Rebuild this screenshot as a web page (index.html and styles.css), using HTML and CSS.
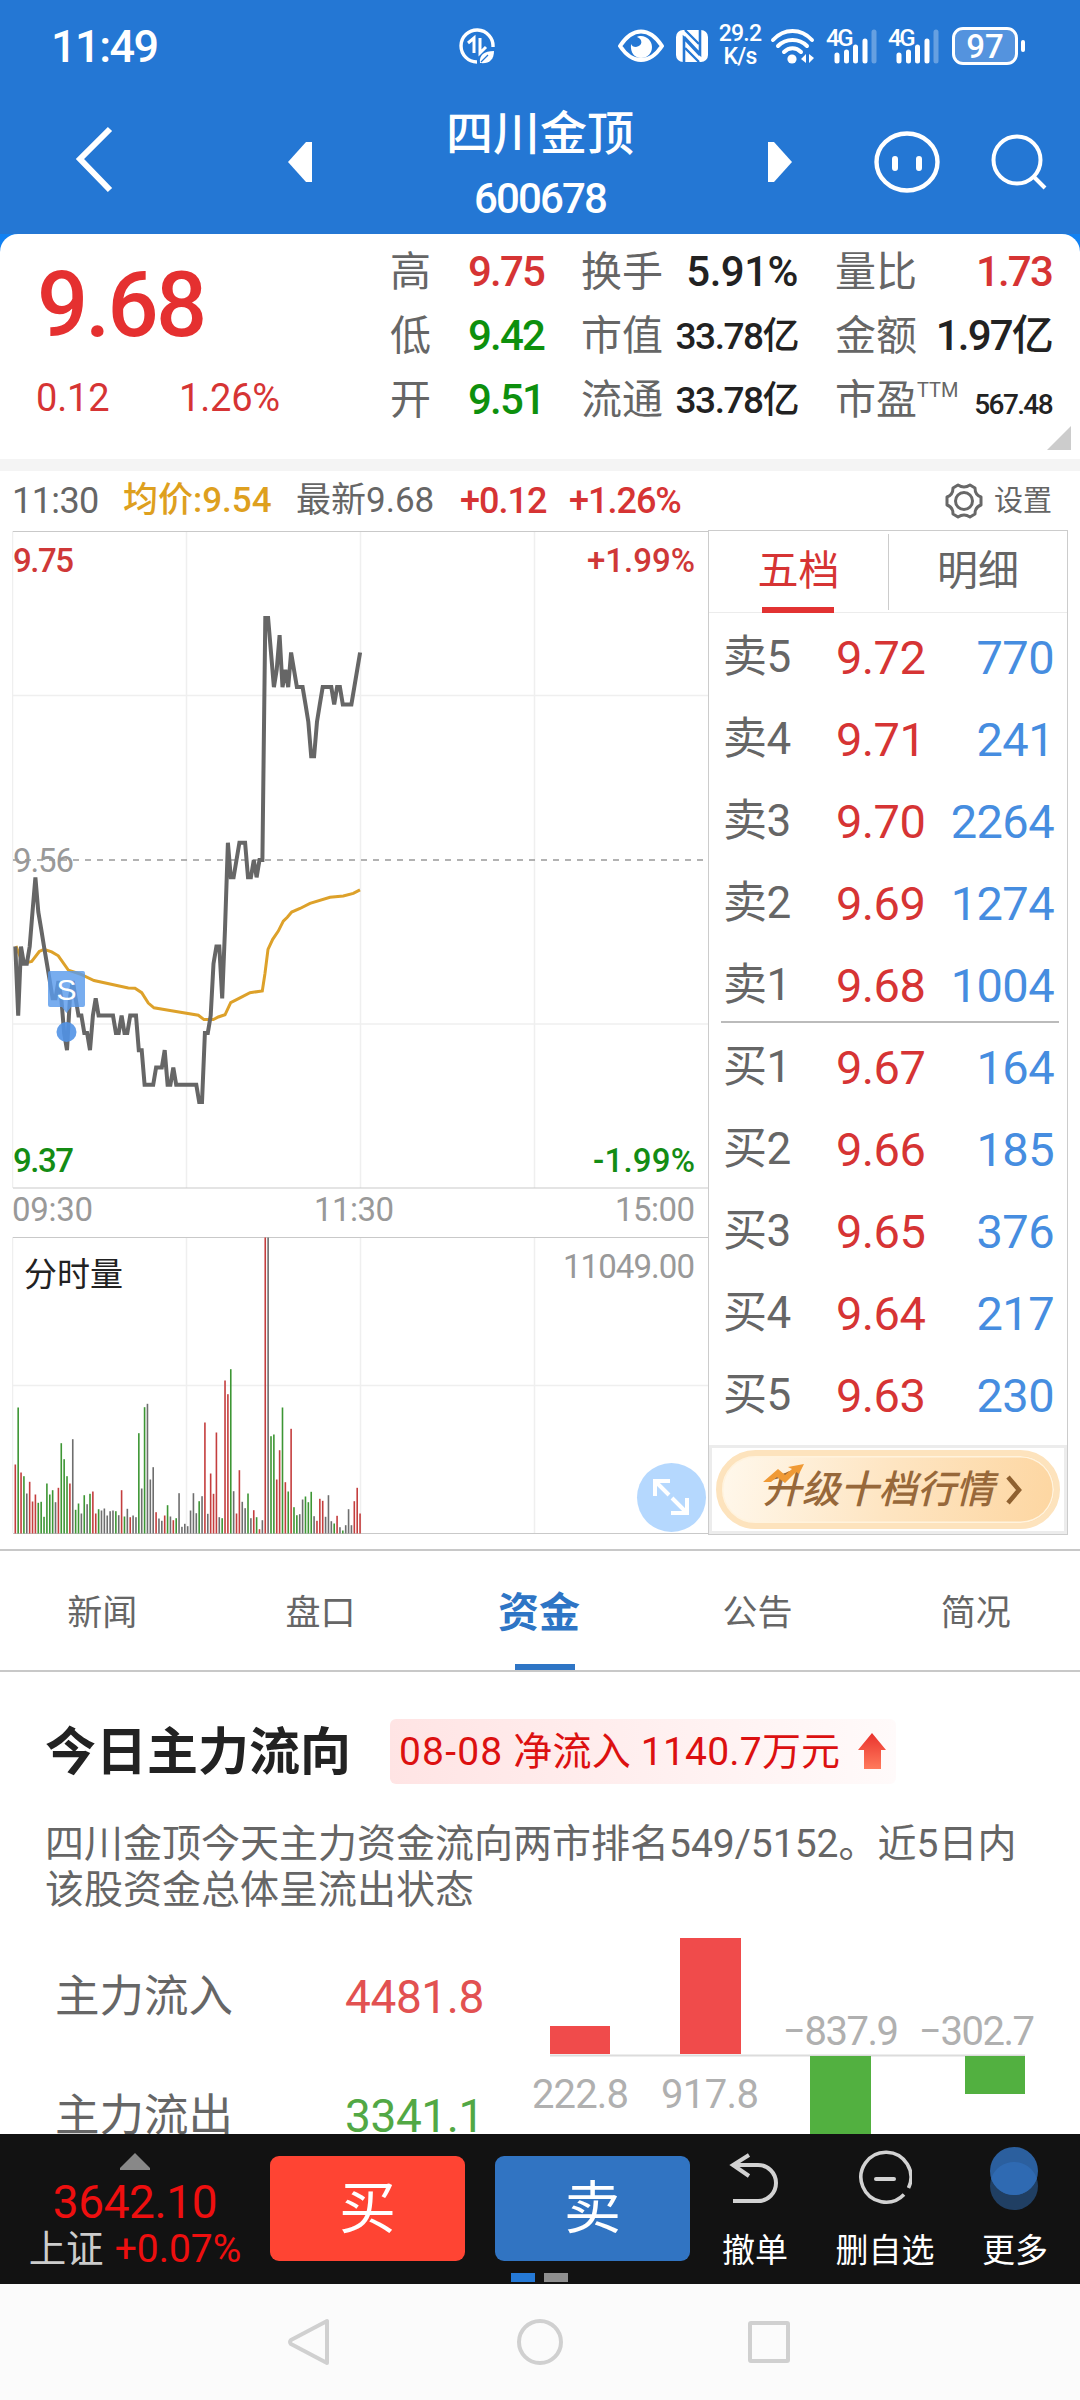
FILE: index.html
```html
<!DOCTYPE html>
<html lang="zh-CN">
<head>
  <meta charset="UTF-8" />
  <meta name="viewport" content="width=device-width, initial-scale=1.0"/>
  <title>四川金顶 600678</title>
  <link rel="stylesheet" href="styles.css">
</head>
<body>

  <div class="app">
    <!-- Status bar -->
    <div class="status-bar">
      <span class="clock">11:49</span>
      <svg class="icon-saver" width="36" height="36" viewBox="0 0 36 36">
        <path d="M34 19A16 16 0 1 0 18 34" fill="none" stroke="#fff" stroke-width="3.4"/>
        <path d="M9 15l6-5v15M21 10v15l6-6" fill="none" stroke="#fff" stroke-width="3"/>
        <path d="M21 35c-1-8 4-12 14-12 0 9-5 13-14 12z" fill="#fff"/>
        <path d="M22 34l7-7" stroke="#2477d4" stroke-width="1.3"/>
      </svg>
      <div class="status-icons">
        <svg width="46" height="34" viewBox="0 0 46 34">
          <path d="M2 17C8 8 14 2.500 23 2.500S38 8 44 17C38 26 32 31 23 31S8 26 2 17z" fill="none" stroke="#fff" stroke-width="4" stroke-linejoin="round"/>
          <path d="M19 8c6 2 6 9-1 10-3 0-4-1-5-3-1 9 4 14 10 14 7 0 11-5 11-11S29 7 23 7c-2 0-3 0-4 1z" fill="#fff"/>
        </svg>
        <svg width="32" height="34" viewBox="0 0 32 34">
          <rect x="0" y="1" width="32" height="32" rx="7" fill="#fff"/>
          <path d="M8 33V9l16 17M24 1v24L8 8" fill="none" stroke="#2477d4" stroke-width="2.600"/>
          <path d="M9 1l14 14M9 19l14 14" stroke="#2477d4" stroke-width="2.400"/>
        </svg>
        <div class="net-speed"><span>29.2</span><span>K/s</span></div>
        <svg width="46" height="36" viewBox="0 0 46 36">
          <g fill="none" stroke="#fff" stroke-width="4" stroke-linecap="round">
            <path d="M3 12C14 0 31 0 42 12"/>
            <path d="M8 18c8-8 21-8 29 0"/>
            <path d="M14 24c5-5 12-5 17 0"/>
          </g>
          <circle cx="22" cy="31" r="4.600" fill="#fff"/>
          <path d="M36 26v9l-5-4zM39 26v9l5-5z" fill="#fff"/>
        </svg>
        <div class="signal">
          <span>4G</span>
          <svg width="44" height="36" viewBox="0 0 44 36">
            <g stroke="#fff" stroke-width="5" stroke-linecap="round">
              <path d="M3 27v6M12.500 24v9M21.500 19v14M31 13v20"/>
              <path d="M40 4v29" opacity=".3"/>
            </g>
          </svg>
        </div>
        <div class="signal">
          <span>4G</span>
          <svg width="44" height="36" viewBox="0 0 44 36">
            <g stroke="#fff" stroke-width="5" stroke-linecap="round">
              <path d="M3 27v6M12.500 24v9M21.500 19v14M31 13v20"/>
              <path d="M40 4v29" opacity=".3"/>
            </g>
          </svg>
        </div>
        <div class="battery">97</div>
      </div>
    </div>

    <!-- Header -->
    <div class="header">
      <svg class="back" width="40" height="68" viewBox="0 0 40 68"><path d="M36 4L6 34l30 31" fill="none" stroke="#fff" stroke-width="6"/></svg>
      <svg class="prev" width="24" height="40" viewBox="0 0 24 40"><path d="M0 20L18 0h6v40h-6z" fill="#fff"/></svg>
      <div class="stock">
        <h1>四川金顶</h1>
        <p>600678</p>
      </div>
      <svg class="next" width="24" height="40" viewBox="0 0 24 40"><path d="M24 20L6 0H0v40h6z" fill="#fff"/></svg>
      <svg class="robot" width="66" height="62" viewBox="0 0 66 62">
        <ellipse cx="33" cy="31" rx="30.500" ry="28.500" fill="none" stroke="#fff" stroke-width="4.400"/>
        <path d="M21 28v9M45 28v9" stroke="#fff" stroke-width="6" stroke-linecap="round"/>
      </svg>
      <svg class="search" width="58" height="58" viewBox="0 0 58 58">
        <circle cx="27" cy="27" r="23.500" fill="none" stroke="#fff" stroke-width="4"/>
        <path d="M43 43l12 12" stroke="#fff" stroke-width="4"/>
      </svg>
    </div>

    <!-- Quote -->
    <div class="quote-wrap">
      <div class="quote">
        <div class="quote-price">
          <div class="price">9.68</div>
          <div class="change"><span>0.12</span><span>1.26%</span></div>
        </div>
        <div class="quote-grid">
          <span class="label">高</span><span class="red">9.75</span>
          <span class="label">换手</span><span class="value wide">5.91%</span>
          <span class="label">量比</span><span class="value red">1.73</span>

          <span class="label">低</span><span class="green">9.42</span>
          <span class="label">市值</span><span class="value mid">33.78亿</span>
          <span class="label">金额</span><span class="value">1.97亿</span>

          <span class="label">开</span><span class="green">9.51</span>
          <span class="label">流通</span><span class="value mid">33.78亿</span>
          <span class="label">市盈<sup>TTM</sup></span><span class="value small">567.48</span>
        </div>
      </div>
    </div>

    <!-- Minute info -->
    <div class="info-bar">
      <span>11:30</span>
      <span class="avg">均价:9.54</span>
      <span>最新9.68</span>
      <span class="red">+0.12</span>
      <span class="red">+1.26%</span>
      <div class="setting">
        <svg width="38" height="38" viewBox="0 0 38 38" fill="none" stroke="#686868" stroke-width="3">
          <path d="M13 3q6 4 12 0l5 3q0 7 6 9v8q-6 2-6 9l-5 3q-6-4-12 0l-5-3q0-7-6-9v-8q6-2 6-9z" stroke-linejoin="round"/>
          <circle cx="19" cy="19" r="8.500"/>
        </svg>
        设置
      </div>
    </div>

    <div class="market">
      <!-- Minute chart -->
      <svg class="chart" width="697" height="1006" viewBox="12 530 697 1006">
        <g class="grid">
          <path d="M186.500 531v657M360.500 531v657M534.500 531v657M13 695.500h695M13 1024h695"/>
          <path d="M186.500 1237v296M360.500 1237v296M534.500 1237v296M13 1385.500h695"/>
          <path d="M12.500 531v657M12.500 1237v296"/>
        </g>
        <path class="frame" d="M13 531.500h695M13 1188h695M13 1237.500h695M13 1533.500h695"/>
        <path class="zero" d="M13 860h692"/>
        <g class="chart-text">
          <text x="13" y="572" textLength="61" class="up">9.75</text>
          <text x="695" y="572" textLength="108" text-anchor="end" class="up">+1.99%</text>
          <text x="13" y="872" textLength="61">9.56</text>
          <text x="13" y="1172" textLength="61" class="down">9.37</text>
          <text x="695" y="1172" textLength="102" text-anchor="end" class="down">-1.99%</text>
          <text x="12" y="1221" textLength="81">09:30</text>
          <text x="314" y="1221" textLength="80">11:30</text>
          <text x="615" y="1221" textLength="80">15:00</text>
          <text x="24" y="1286" class="vol-title">分时量</text>
          <text x="695" y="1278" textLength="132" text-anchor="end">11049.00</text>
        </g>
        <g id="volume"></g>
        <polyline class="avg-line" points="16,946 22.7,963.6 31.7,961.5 39.3,951.5 44,949.3 51.7,951.9 58.3,955.8 68.3,970.1 80,974 94,980.5 128.3,987.9 135,988.3 141.7,992.7 148.3,1003.1 154,1007.8 170,1010.4 198.3,1015.2 204,1019.6 213.3,1019.6 218.3,1017 225,1014.8 230.7,1002.6 240,997.9 250,992.7 262.3,990.9 265,973.2 268,949.3 272.7,939.3 278.3,931.1 283.3,921.1 287.3,917.2 291.7,912 300,908.5 310,903.3 330,897.3 343.3,896 353.3,893.4 360,889.9"/>
        <polyline class="price-line" id="priceLine" points=""/>
        <!-- sell mark -->
        <circle cx="66.500" cy="1032" r="10" fill="#5192e6" opacity=".9"/>
        <path d="M50 971h33q2 0 2 2v32q0 2-2 2H71l-4.500 6-4.500-6H50q-2 0-2-2v-32q0-2 2-2z" fill="#5a9bec" opacity=".82"/>
        <text x="66.500" y="1000" text-anchor="middle" class="mark">S</text>
        <!-- full screen -->
        <circle cx="671.500" cy="1497.500" r="34.500" fill="#b5d8fe"/>
        <path d="M655 1496v-15h15M655 1481l14 14M687 1498v15h-16M687 1513l-15-15" fill="none" stroke="#fff" stroke-width="4"/>
      </svg>

      <!-- Order book -->
      <div class="book">
        <div class="book-tabs">
          <span class="active">五档</span>
          <span>明细</span>
        </div>
        <ul class="sell">
          <li><span>卖5</span><b>9.72</b><i>770</i></li>
          <li><span>卖4</span><b>9.71</b><i>241</i></li>
          <li><span>卖3</span><b>9.70</b><i>2264</i></li>
          <li><span>卖2</span><b>9.69</b><i>1274</i></li>
          <li><span>卖1</span><b>9.68</b><i>1004</i></li>
        </ul>
        <ul class="buy">
          <li><span>买1</span><b>9.67</b><i>164</i></li>
          <li><span>买2</span><b>9.66</b><i>185</i></li>
          <li><span>买3</span><b>9.65</b><i>376</i></li>
          <li><span>买4</span><b>9.64</b><i>217</i></li>
          <li><span>买5</span><b>9.63</b><i>230</i></li>
        </ul>
        <div class="upgrade">
          <div class="upgrade-btn">
            <svg class="trend" width="42" height="22" viewBox="0 0 42 22"><path d="M0 18L15 5l7 6 7-6-4-2 16-3-5 10-3-2-11 11-8-6-6 5z" fill="#f09a35"/></svg>
            <span>升级十档行情</span>
            <svg width="18" height="30" viewBox="0 0 18 30"><path d="M3 2l11 13L3 28" fill="none" stroke="#8f6130" stroke-width="4.500"/></svg>
          </div>
        </div>
      </div>
    </div>

    <!-- Tabs -->
    <div class="tabs">
      <span>新闻</span>
      <span>盘口</span>
      <span class="active">资金</span>
      <span>公告</span>
      <span>简况</span>
    </div>

    <!-- Fund flow -->
    <div class="fund">
      <div class="fund-head">
        <h2>今日主力流向</h2>
        <div class="badge">
          <span><em>08-08</em> 净流入 1140.7万元</span>
          <svg width="28" height="37" viewBox="0 0 28 37">
            <defs><linearGradient id="arrow" x1="0" y1="0" x2="0" y2="1"><stop offset="0" stop-color="#e9322d"/><stop offset="1" stop-color="#ff7a5c"/></linearGradient></defs>
            <path d="M14 0l14 17h-5v19H6V17H0z" fill="url(#arrow)"/>
          </svg>
        </div>
      </div>
      <p class="fund-desc">四川金顶今天主力资金流向两市排名549/5152。近5日内该股资金总体呈流出状态</p>
      <div class="fund-body">
        <div class="fund-list">
          <div><span>主力流入</span><b class="in">4481.8</b></div>
          <div><span>主力流出</span><b class="out">3341.1</b></div>
        </div>
        <svg class="fund-chart" width="520" height="200" viewBox="525 1934 520 200">
          <path d="M550 2055.500h475" stroke="#dcdcdc" stroke-width="2"/>
          <g fill="#f04b4b">
            <rect x="550" y="2026" width="60" height="28"/>
            <rect x="680" y="1938" width="61" height="116"/>
          </g>
          <g fill="#52b040">
            <rect x="810" y="2056" width="61" height="90"/>
            <rect x="965" y="2056" width="60" height="38"/>
          </g>
          <g class="fund-text">
            <text x="532" y="2108" textLength="97">222.8</text>
            <text x="661" y="2108" textLength="98">917.8</text>
            <text x="783" y="2045" textLength="116">−837.9</text>
            <text x="919" y="2045" textLength="116">−302.7</text>
          </g>
        </svg>
      </div>
    </div>

    <!-- Trade bar -->
    <div class="trade-bar">
      <div class="index">
        <svg width="30" height="17" viewBox="0 0 30 17"><path d="M15 0l15 15v2H0v-2z" fill="#888"/></svg>
        <div class="index-value">3642.10</div>
        <div class="index-change"><span>上证</span>+0.07%</div>
      </div>
      <button class="btn-buy">买</button>
      <button class="btn-sell">卖</button>
      <div class="tool">
        <svg width="54" height="64" viewBox="0 0 54 64"><path d="M21 9L5 19l16 11M5 19h25a18 18 0 0 1 0 36H5" fill="none" stroke="#d2d2d2" stroke-width="4"/></svg>
        <span>撤单</span>
      </div>
      <div class="tool">
        <svg width="54" height="64" viewBox="0 0 54 64">
          <path d="M46 48.500A25 25 0 1 1 50.500 42" fill="none" stroke="#d2d2d2" stroke-width="3.600"/>
          <path d="M18 33h18" stroke="#d2d2d2" stroke-width="4" stroke-linecap="round"/>
        </svg>
        <span>删自选</span>
      </div>
      <div class="tool">
        <svg width="54" height="64" viewBox="0 0 54 64">
          <circle cx="26" cy="40" r="24" fill="#203f63"/>
          <circle cx="26" cy="25" r="24" fill="#2b5f9e"/>
          <path d="M3.200 32.500a24 24 0 0 1 45.600 0a24 24 0 0 1-45.600 0z" fill="#2f6ab2"/>
        </svg>
        <span>更多</span>
      </div>
      <div class="pager"><span class="active"></span><span></span></div>
    </div>

    <!-- System navigation -->
    <div class="nav">
      <svg width="46" height="50" viewBox="0 0 46 50"><path d="M41 4v42L5 27q-2-2 0-4z"/></svg>
      <svg width="50" height="50" viewBox="0 0 50 50"><circle cx="26" cy="25" r="21"/></svg>
      <svg width="46" height="50" viewBox="0 0 46 50"><rect x="4" y="6" width="38" height="38" rx="1"/></svg>
    </div>
  </div>

  <script src="script.js"></script>
</body>
</html>
```

FILE: styles.css
```css
* { margin: 0; padding: 0; box-sizing: border-box; }

body {
  font-family: Roboto, "Noto Sans CJK SC", sans-serif;
  background-color: #fff;
  color: #666;
}

svg { display: block; flex-shrink: 0; }
ul { list-style: none; }
b, i, em { font-weight: normal; font-style: normal; }

.app {
  display: flex;
  flex-direction: column;
  width: 1080px;
  height: 2400px;
  overflow: hidden;
}

.app > div { flex-shrink: 0; }

.red { color: #d63434; }
.green { color: #0d900d; }

/* Status bar */
.status-bar {
  display: flex;
  align-items: center;
  height: 92px;
  padding-left: 51px;
  background-color: #2477d4;
  color: #fff;
}

.clock {
  width: 408px;
  font-size: 45px;
  font-weight: 500;
  letter-spacing: -1.5px;
}

.status-icons {
  display: flex;
  align-items: center;
  margin-left: 123px;
}

.net-speed {
  display: flex;
  flex-direction: column;
  align-items: center;
  width: 42px;
  margin: -3px 9px 0 11px;
  font-size: 23px;
  line-height: 23px;
  font-weight: 500;
  letter-spacing: -0.8px;
}

.status-icons > svg + svg { margin-left: 12px; }

.signal {
  position: relative;
  width: 50px;
  margin-left: 12px;
  padding-left: 6px;
}

.signal span {
  position: absolute;
  left: -2px;
  top: -2px;
  font-size: 24px;
  line-height: 24px;
  font-weight: 500;
  letter-spacing: -2.5px;
}

.battery {
  position: relative;
  width: 66px;
  height: 38px;
  margin-left: 12px;
  border: 3px solid #fff;
  border-radius: 11px;
  background-color: #5493de;
  font-size: 33px;
  line-height: 33px;
  font-weight: 500;
  text-align: center;
}

.battery::after {
  content: "";
  position: absolute;
  right: -10px;
  top: 10px;
  width: 4px;
  height: 12px;
  border-radius: 2px;
  background-color: #fff;
}

/* Header */
.header {
  display: flex;
  align-items: center;
  height: 142px;
  padding: 0 31px 8px 74px;
  background-color: #2477d4;
  color: #fff;
}

.prev { margin: 6px 0 0 174px; }
.next { margin-top: 6px; }
.robot { margin: 6px 0 0 82px; }
.search { margin: 6px 0 0 50px; }

.stock {
  width: 456px;
  text-align: center;
}

.stock h1 {
  font-size: 47px;
  line-height: 60px;
  font-weight: 500;
  margin-top: 7px;
}

.stock p {
  font-size: 42px;
  line-height: 46px;
  font-weight: 500;
  letter-spacing: -1.9px;
  margin-top: 12px;
}

/* Quote */
.quote-wrap {
  background-color: #1181f2;
  border-bottom: 12px solid #f4f4f4;
}

.quote {
  position: relative;
  display: flex;
  height: 225px;
  padding-top: 6px;
  border-radius: 18px 18px 0 0;
  background-color: #fff;
}

.quote::after {
  content: "";
  position: absolute;
  right: 9px;
  bottom: 9px;
  border-left: 24px solid transparent;
  border-bottom: 24px solid #ccc;
}

.quote-price {
  width: 390px;
  padding: 12px 0 0 37px;
  color: #e53030;
}

.price {
  font-size: 90px;
  line-height: 108px;
  font-weight: 500;
  letter-spacing: -2.8px;
}

.change {
  display: grid;
  grid-template-columns: 143px 1fr;
  margin: 14px 0 0 -1px;
  font-size: 38px;
  line-height: 48px;
  letter-spacing: -0.2px;
  color: #d63434;
}

.quote-grid {
  display: grid;
  grid-template-columns: 78px 113px 84px 133px 124px 130px;
  grid-auto-rows: 64px;
  height: 192px;
  font-size: 42px;
  line-height: 64px;
  font-weight: 500;
  letter-spacing: -1.8px;
  white-space: nowrap;
}

.quote-grid .label {
  font-size: 41px;
  font-weight: 400;
  letter-spacing: 0;
}

.quote-grid .label sup {
  font-size: 20px;
  line-height: 20px;
  vertical-align: 17px;
}

.quote-grid > .label:nth-child(6n + 5) { padding-left: 37px; }

.value {
  text-align: right;
  color: #222;
}

.value.red { color: #d63434; }
.value.wide { letter-spacing: -0.5px; }
.value.mid { font-size: 37px; line-height: 66px; letter-spacing: -1.5px; }
.value.small { font-size: 28px; line-height: 74px; letter-spacing: -1.6px; }

/* Minute info */
.info-bar {
  display: grid;
  grid-template-columns: 111px 173px 164px 109px 376px 1fr;
  align-items: center;
  height: 59px;
  padding-left: 12px;
  white-space: nowrap;
}

.info-bar > span {
  font-size: 36px;
  line-height: 60px;
  letter-spacing: -0.6px;
}

.info-bar > span:nth-child(n + 2):nth-child(-n + 3) { font-size: 35px; letter-spacing: 0; }
.info-bar > .avg { font-weight: 500; color: #dea01e; }
.info-bar > .red { font-weight: 500; letter-spacing: -1px; }

.setting {
  display: flex;
  align-items: center;
  gap: 11px;
  font-size: 29px;
  line-height: 56px;
}

/* Chart and order book */
.market {
  display: flex;
  height: 1021px;
  padding-left: 12px;
  border-bottom: 2px solid #c8c8c8;
}

.grid { fill: none; stroke: #efefef; stroke-width: 1.5; }
.frame { fill: none; stroke: #c9c9c9; stroke-width: 1.2; }
.zero { stroke: #999; stroke-width: 1.5; stroke-dasharray: 6 6; }
.avg-line { fill: none; stroke: #dda12a; stroke-width: 3; }
.price-line { fill: none; stroke: #666; stroke-width: 4; }

.chart-text { font-size: 33px; fill: #999; }
.chart-text .up { fill: #cf3838; font-weight: 500; }
.chart-text .down { fill: #148c14; font-weight: 500; }
.chart-text .vol-title { font-size: 33px; fill: #222; }
.mark { font-family: "Liberation Sans", sans-serif; font-size: 30px; fill: #fff; }

.vol-r { fill: #c43e3e; }
.vol-g { fill: #3d9634; }
.vol-k { fill: #6e6e6e; }

.book {
  display: flex;
  flex-direction: column;
  width: 360px;
  height: 1005px;
  margin-left: -1px;
  border: 1.5px solid #ccc;
}

.book-tabs {
  display: grid;
  grid-template-columns: 1fr 1fr;
  height: 82px;
  border-bottom: 1px solid #ececec;
  font-size: 41px;
  line-height: 74px;
  text-align: center;
}

.book-tabs span {
  position: relative;
  height: 76px;
  margin-top: 3px;
}

.book-tabs span + span { border-left: 1.5px solid #ccc; }
.book-tabs .active { color: #d63434; }

.book-tabs .active::after {
  content: "";
  position: absolute;
  left: 53px;
  bottom: -3px;
  width: 72px;
  height: 6px;
  background-color: #e23232;
}

.book li {
  display: grid;
  grid-template-columns: 113px 90px 1fr;
  height: 82px;
  padding: 0 13px 0 14px;
  font-size: 47px;
  line-height: 84px;
  letter-spacing: -0.6px;
}

.book li span { font-size: 44px; line-height: 83px; white-space: nowrap; letter-spacing: -0.4px; }
.book li b { color: #d63434; }
.book li i { color: #468de0; text-align: right; }

.sell { height: 408px; padding-top: 3px; }

.buy {
  height: 424px;
  padding-top: 5px;
  background: linear-gradient(#bbb, #bbb) 12px 0 / 338px 2px no-repeat;
}

.upgrade {
  flex: 1;
  display: flex;
  padding: 2px 4px 2px 4px;
  border: 3px solid #ececec;
}

.upgrade-btn {
  position: relative;
  flex: 1;
  display: flex;
  align-items: center;
  gap: 11px;
  height: 79px;
  padding-left: 41px;
  border-radius: 40px;
  background: linear-gradient(100deg, #fff8ec, #fee5c2 50%, #fdd6a1);
  border: 6px solid #fde3bd;
  box-shadow: inset 0 0 0 1.5px #fff3de;
}

.upgrade-btn span {
  font-size: 38.5px;
  font-weight: 500;
  font-style: italic;
  line-height: 62px;
  color: #97683a;
}

.trend {
  position: absolute;
  left: 41px;
  top: 8px;
}

/* Tabs */
.tabs {
  display: grid;
  grid-template-columns: repeat(5, 1fr);
  width: 1092px;
  height: 121px;
  margin-left: -7px;
  border-bottom: 2px solid #c8c8c8;
  font-size: 35px;
  line-height: 125px;
  text-align: center;
}

.tabs .active {
  position: relative;
  font-size: 41px;
  font-weight: 700;
  color: #2e75c5;
}

.tabs .active::after {
  content: "";
  position: absolute;
  left: 85px;
  bottom: 6px;
  width: 60px;
  height: 6px;
  background-color: #2e75c5;
}

/* Fund flow */
.fund {
  height: 462px;
  overflow: hidden;
}

.fund-head {
  display: flex;
  align-items: center;
  padding: 45px 0 0 45px;
}

.fund-head h2 {
  width: 345px;
  font-size: 51px;
  line-height: 67px;
  font-weight: 700;
  color: #222;
  padding-top: 2px;
}

.badge {
  display: flex;
  align-items: center;
  justify-content: space-between;
  width: 506px;
  height: 65px;
  padding: 0 10px 0 9px;
  border-radius: 6px;
  background: linear-gradient(90deg, #ffe4e4, #fffafa);
  font-size: 39px;
  line-height: 62px;
  letter-spacing: 0.2px;
  color: #dc1010;
  white-space: nowrap;
}

.badge em { letter-spacing: 1.2px; }

.fund-desc {
  padding: 35px 55px 0 45px;
  font-size: 39px;
  line-height: 46px;
}

.fund-body {
  display: flex;
  padding: 21px 0 0 55px;
}

.fund-list {
  width: 470px;
  font-size: 46px;
}

.fund-list div {
  display: grid;
  grid-template-columns: 290px 1fr;
  height: 119px;
  line-height: 126px;
}

.fund-list span { font-size: 44.5px; }
.fund-list b { letter-spacing: -0.4px; }
.in { color: #e25151; }
.out { color: #52a845; }
.fund-text { font-size: 40px; fill: #b0b0b0; }

/* Trade bar */
.trade-bar {
  position: relative;
  display: flex;
  height: 150px;
  background-color: #121212;
}

.index {
  display: flex;
  flex-direction: column;
  align-items: center;
  width: 270px;
  padding-top: 19px;
  color: #ee0f0f;
}

.index-value {
  margin-top: 9px;
  font-size: 46px;
  line-height: 46px;
  letter-spacing: -0.4px;
}

.index-change {
  margin-top: 4px;
  font-size: 39px;
  line-height: 40px;
  white-space: nowrap;
}

.index-change span {
  margin-right: 11px;
  font-size: 37.5px;
  color: #ccc;
}

.trade-bar button {
  width: 195px;
  height: 105px;
  margin: 22px 30px 0 0;
  border: none;
  border-radius: 9px;
  font-family: inherit;
  font-size: 57px;
  line-height: 80px;
  color: #fff;
}

.btn-buy { background-color: #ff4433; }
.trade-bar .btn-sell { margin-right: 0; background-color: #3174c2; }

.tool {
  display: flex;
  flex-direction: column;
  align-items: center;
  width: 130px;
  padding-top: 12px;
  font-size: 33px;
  line-height: 40px;
  color: #fff;
}

.tool span { margin-top: 21px; }

.pager {
  position: absolute;
  left: 511px;
  bottom: 2px;
  display: flex;
  gap: 9px;
}

.pager span { width: 24px; height: 9px; background-color: #8f8f8f; }
.pager .active { background-color: #2579d6; }

/* System navigation */
.nav {
  display: flex;
  justify-content: space-between;
  height: 116px;
  padding: 33px 288px 0 286px;
  background-color: #fbfbfb;
}

.nav svg {
  fill: none;
  stroke: #d0d0d0;
  stroke-width: 4;
  stroke-linejoin: round;
}
```

FILE: script.js
```js
// price of each minute in cents above 9.00
const prices = [
  51, 47, 51, 50, 50, 51, 53, 55, 53, 52, 51, 50, 49, 48, 48, 49, 48, 46, 45, 48,
  49, 48, 47, 47, 46, 46, 45, 47, 48, 47, 47, 47, 47, 47, 47, 46, 46, 47, 46, 46,
  47, 47, 47, 45, 45, 43, 43, 43, 43, 44, 44, 44, 45, 43, 43, 44, 43, 43, 43, 43,
  43, 43, 43, 43, 42, 42, 46, 46, 47, 50, 51, 51, 48, 52, 57, 55, 55, 56, 57, 57,
  57, 55, 55, 56, 55, 56, 56, 70, 70, 68, 66, 67, 69, 66, 67, 66, 68, 67, 66, 66,
  66, 65, 64, 62, 62, 64, 65, 66, 66, 66, 66, 65, 66, 66, 65, 65, 65, 65, 66, 67, 68
];

// r = up, g = down, k = flat
const volumes = `r207 g378 r183 g172 k120 r155 r96 r117 g92 g95 g50 g150 g117 g130 k94 r137 g271 g223 g172 r150
k283 g71 g90 k60 g115 k88 g119 r126 r60 g73 k69 k75 k54 k67 k69 g67 k55 r130 g51 k74
r49 k54 k49 g301 k135 g379 k389 k162 k199 r64 k45 k38 r54 g85 k51 r40 g46 k121 k20 k29
k22 k69 k121 k61 g97 k112 r333 k59 r180 r119 r303 k49 g46 r459 r418 g493 k127 r60 r190 k95
k76 g120 k46 r70 g49 r13 k40 r888 k888 g292 g297 r162 r250 g378 r154 g126 r314 g79 g55 k58
k102 g111 g94 g125 k52 r38 r104 r98 k50 k115 k37 g30 r53 k19 g9 k25 k73 k25 r97 r137 r60`.split(/\s+/);

const startX = 15.3;
const stepX = 2.873;

document.getElementById('priceLine').setAttribute('points', prices.map((p, i) => {
  const x = startX + i * stepX;
  const y = 860 - (p - 56) * 17.29;
  return x.toFixed(1) + ',' + y.toFixed(1);
}).join(' '));

document.getElementById('volume').innerHTML = volumes.map((v, i) => {
  const h = Number(v.slice(1)) / 3;
  const x = startX - 0.8 + i * stepX;
  return `<rect class="vol-${v[0]}" x="${x.toFixed(2)}" y="${(1533.5 - h).toFixed(1)}" width="1.6" height="${h.toFixed(1)}"/>`;
}).join('');
```
